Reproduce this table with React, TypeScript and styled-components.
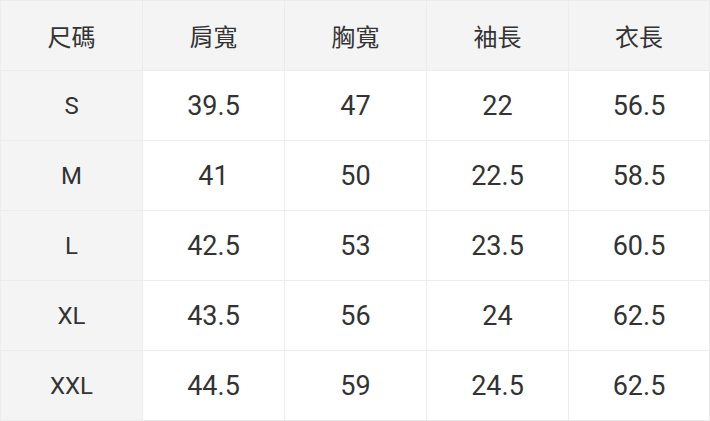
import React from "react";
import styled, { createGlobalStyle } from "styled-components";

const Global = createGlobalStyle`
  html, body { margin: 0; padding: 0; background: #ffffff; }
  body { font-family: Roboto, "Noto Sans CJK TC", sans-serif; }
`;

const Table = styled.div`
  width: 710px;
  box-sizing: border-box;
  display: grid;
  grid-template-columns: repeat(4, 142px) 1fr;
  grid-auto-rows: 70px;
  border-left: 1px solid #ececec;
  border-top: 1px solid #ececec;
`;

const Cell = styled.div<{ $head?: boolean; $label?: boolean }>`
  box-sizing: border-box;
  display: flex;
  align-items: center;
  justify-content: center;
  border-right: 1px solid #ececec;
  border-bottom: 1px solid #ececec;
  background: ${(p) => (p.$head || p.$label ? "#f4f4f4" : "#ffffff")};
  color: #333333;
  font-family: Roboto, "Noto Sans CJK TC", sans-serif;
  font-weight: 400;
  font-size: ${(p) => (p.$head ? "24px" : p.$label ? "24px" : "27px")};
  padding-top: ${(p) => (p.$head ? "0" : "1px")};
`;

const headers = ["尺碼", "肩寬", "胸寬", "袖長", "衣長"];
const rows = [
  ["S", "39.5", "47", "22", "56.5"],
  ["M", "41", "50", "22.5", "58.5"],
  ["L", "42.5", "53", "23.5", "60.5"],
  ["XL", "43.5", "56", "24", "62.5"],
  ["XXL", "44.5", "59", "24.5", "62.5"],
];

export default function App() {
  return (
    <>
      <Global />
      <Table>
        {headers.map((h) => (
          <Cell key={h} $head>
            {h}
          </Cell>
        ))}
        {rows.map((r) =>
          r.map((v, i) => (
            <Cell key={r[0] + i} $label={i === 0}>
              {v}
            </Cell>
          ))
        )}
      </Table>
    </>
  );
}
